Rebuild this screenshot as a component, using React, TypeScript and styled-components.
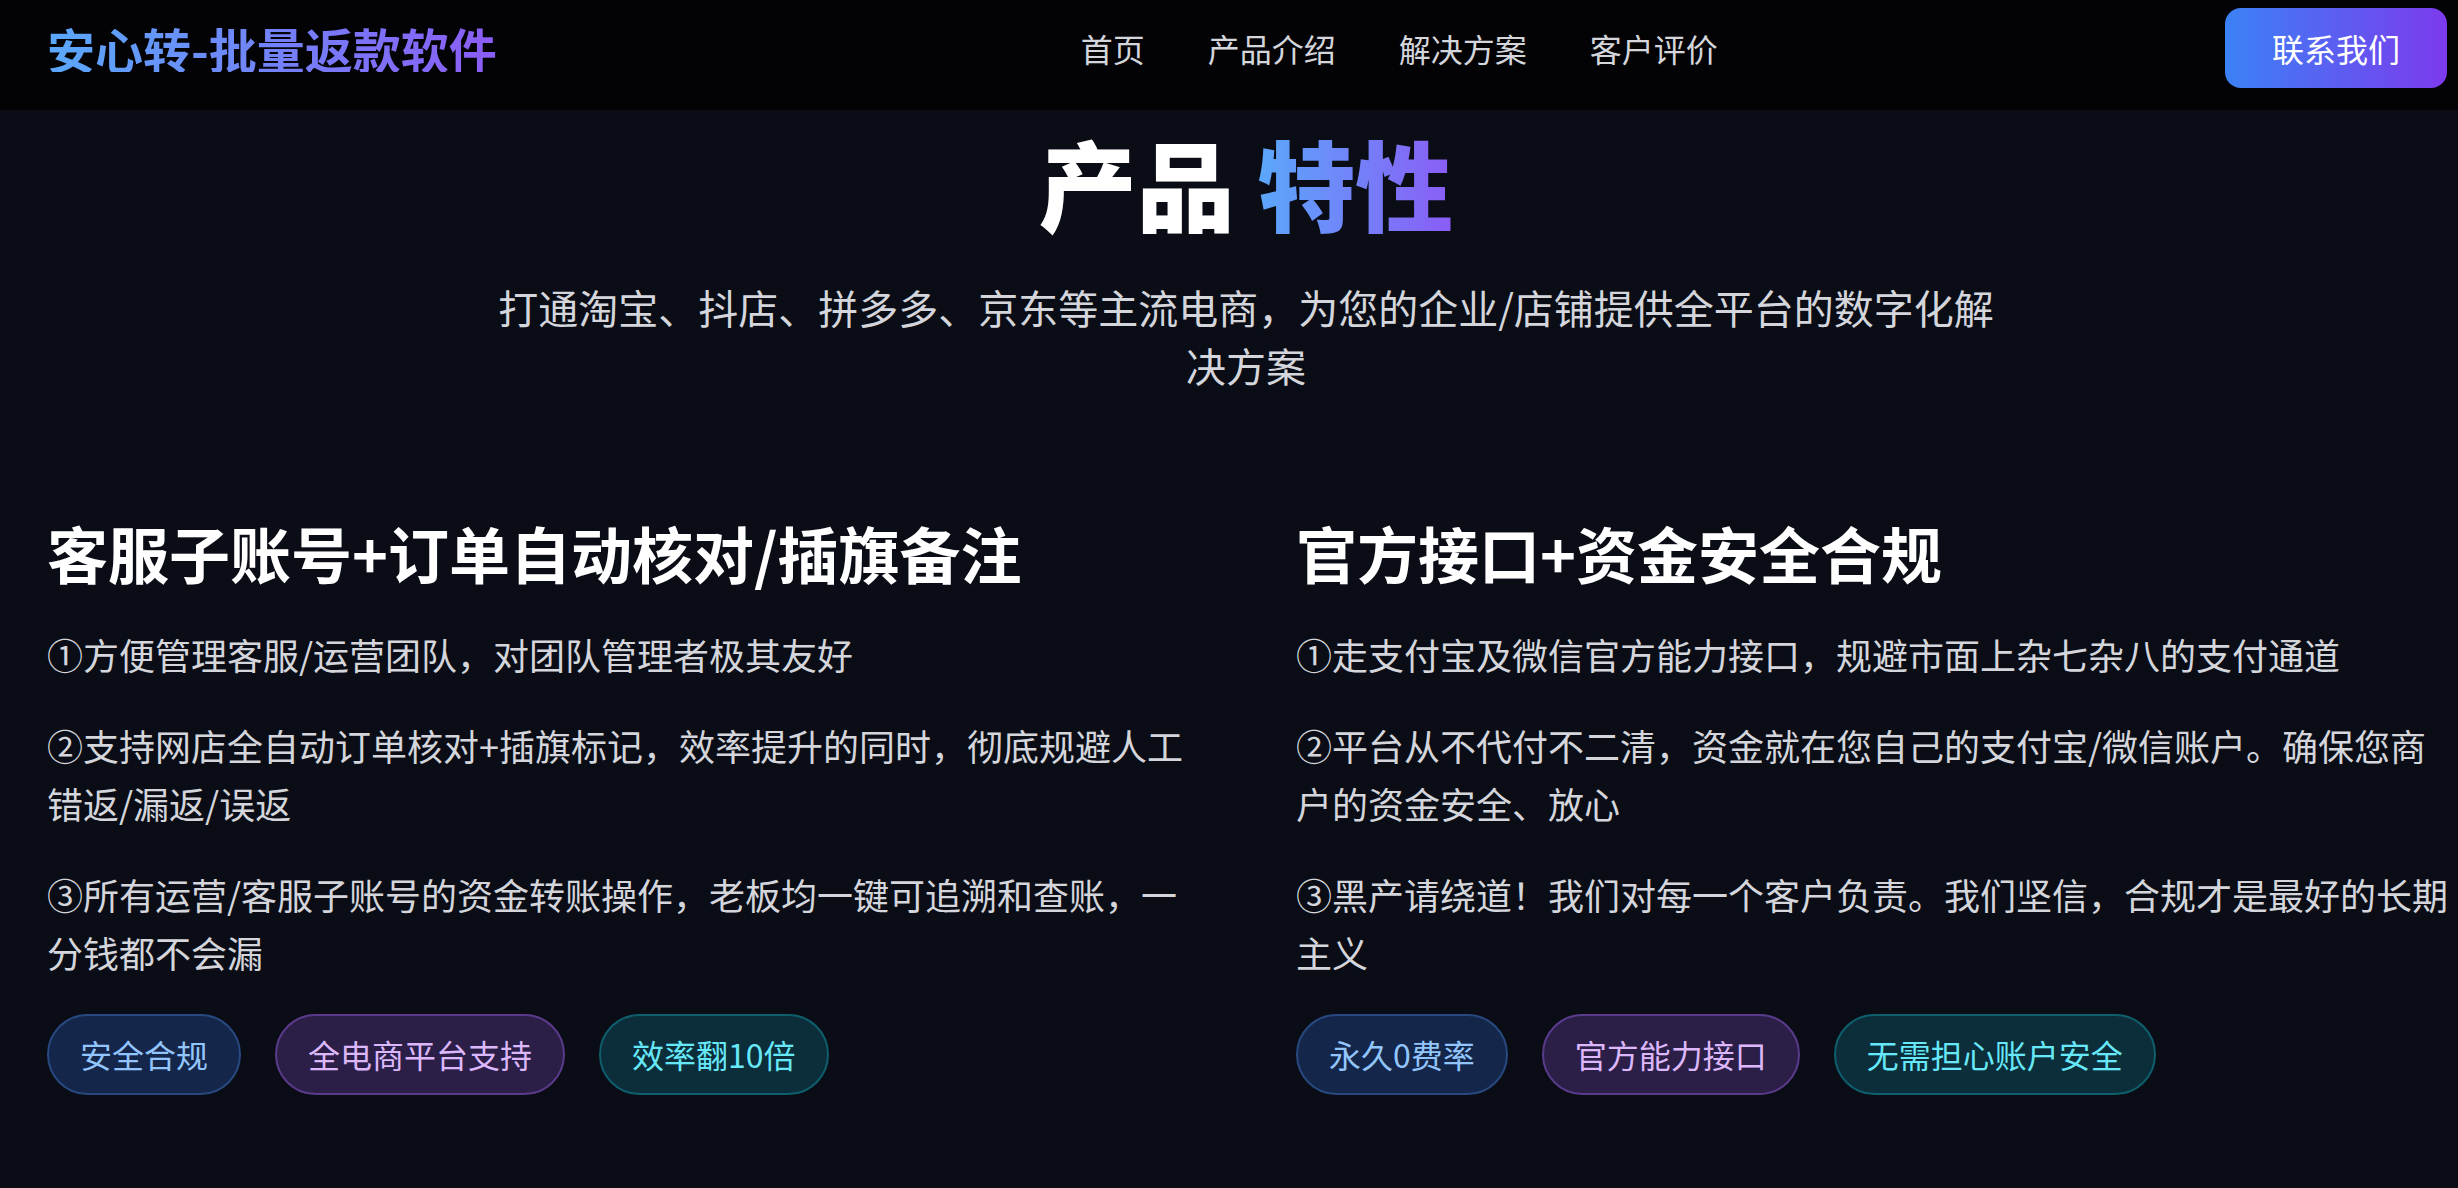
import React from 'react'
import styled, { createGlobalStyle, css } from 'styled-components'

const GlobalStyle = createGlobalStyle`
  html, body {
    margin: 0;
    padding: 0;
    background: #0a0d16;
  }
  body {
    font-family: "Noto Sans CJK SC", "Noto Sans", sans-serif;
    color: #ffffff;
  }
  * {
    box-sizing: border-box;
  }
`

const Page = styled.div`
  min-height: 1188px;
  background: #0a0d16;
`

const Header = styled.header`
  height: 110px;
  background: #030306;
  display: flex;
  align-items: center;
  padding: 0 11px 14px 47px;
`

const Logo = styled.div`
  font-size: 48px;
  font-weight: 700;
  line-height: 1;
  background: linear-gradient(90deg, #5aa8fb 0%, #8b5cf6 100%);
  -webkit-background-clip: text;
  background-clip: text;
  color: transparent;
`

const Nav = styled.nav`
  display: flex;
  gap: 63px;
  margin-left: 584px;
`

const NavLink = styled.a`
  font-size: 32px;
  line-height: 1.4;
  color: #d4d6dc;
  text-decoration: none;
  cursor: pointer;
`

const ContactButton = styled.button`
  margin-left: auto;
  height: 80px;
  padding: 0 47px;
  border: none;
  border-radius: 16px;
  background: linear-gradient(90deg, #3b82f6 0%, #7c3aed 100%);
  color: #ffffff;
  font-family: inherit;
  font-size: 32px;
  cursor: pointer;
`

const Section = styled.section`
  padding: 13px 13px 0 47px;
`

const Title = styled.h2`
  margin: 0;
  text-align: center;
  font-size: 98px;
  font-weight: 900;
  line-height: 1.2;
  color: #ffffff;
`

const GradientText = styled.span`
  background: linear-gradient(90deg, #5aa8fb 0%, #8b5cf6 100%);
  -webkit-background-clip: text;
  background-clip: text;
  color: transparent;
`

const Subtitle = styled.p`
  margin: 37px auto 0;
  max-width: 1530px;
  text-align: center;
  font-size: 40px;
  line-height: 58px;
  color: #d4d6dc;
`

const Columns = styled.div`
  display: grid;
  grid-template-columns: repeat(2, 1158px);
  gap: 91px;
  margin-top: 120px;
`

const Column = styled.div`
  display: flex;
  flex-direction: column;
`

const ColumnTitle = styled.h3`
  margin: 0 0 33px;
  font-size: 61px;
  font-weight: 700;
  line-height: 78px;
  color: #ffffff;
`

const Point = styled.p`
  margin: 0 0 33px;
  font-size: 36px;
  line-height: 58px;
  color: #d4d6dc;
`

const Tags = styled.div`
  display: flex;
  gap: 34px;
`

type Tone = 'blue' | 'purple' | 'cyan'

const tones: Record<Tone, { bg: string; border: string; text: string }> = {
  blue: { bg: '#14264a', border: '#27497f', text: '#93c5fd' },
  purple: { bg: '#2b1f48', border: '#5a3a8a', text: '#dcb8fb' },
  cyan: { bg: '#0b2e3a', border: '#0f5e6c', text: '#67e8f9' },
}

const Tag = styled.span<{ $tone: Tone }>(
  ({ $tone }) => css`
    display: inline-flex;
    align-items: center;
    padding: 15px 31px;
    border-radius: 999px;
    border: 2px solid ${tones[$tone].border};
    background: ${tones[$tone].bg};
    color: ${tones[$tone].text};
    font-size: 32px;
    line-height: 47px;
  `,
)

type Feature = {
  title: string
  points: string[]
  tags: [string, Tone][]
}

const features: Feature[] = [
  {
    title: '客服子账号+订单自动核对/插旗备注',
    points: [
      '①方便管理客服/运营团队，对团队管理者极其友好',
      '②支持网店全自动订单核对+插旗标记，效率提升的同时，彻底规避人工错返/漏返/误返',
      '③所有运营/客服子账号的资金转账操作，老板均一键可追溯和查账，一分钱都不会漏',
    ],
    tags: [
      ['安全合规', 'blue'],
      ['全电商平台支持', 'purple'],
      ['效率翻10倍', 'cyan'],
    ],
  },
  {
    title: '官方接口+资金安全合规',
    points: [
      '①走支付宝及微信官方能力接口，规避市面上杂七杂八的支付通道',
      '②平台从不代付不二清，资金就在您自己的支付宝/微信账户。确保您商户的资金安全、放心',
      '③黑产请绕道！我们对每一个客户负责。我们坚信，合规才是最好的长期主义',
    ],
    tags: [
      ['永久0费率', 'blue'],
      ['官方能力接口', 'purple'],
      ['无需担心账户安全', 'cyan'],
    ],
  },
]

export default function App() {
  return (
    <Page>
      <GlobalStyle />
      <Header>
        <Logo>安心转-批量返款软件</Logo>
        <Nav>
          <NavLink>首页</NavLink>
          <NavLink>产品介绍</NavLink>
          <NavLink>解决方案</NavLink>
          <NavLink>客户评价</NavLink>
        </Nav>
        <ContactButton>联系我们</ContactButton>
      </Header>
      <Section>
        <Title>
          产品 <GradientText>特性</GradientText>
        </Title>
        <Subtitle>打通淘宝、抖店、拼多多、京东等主流电商，为您的企业/店铺提供全平台的数字化解决方案</Subtitle>
        <Columns>
          {features.map((f) => (
            <Column key={f.title}>
              <ColumnTitle>{f.title}</ColumnTitle>
              {f.points.map((p) => (
                <Point key={p}>{p}</Point>
              ))}
              <Tags>
                {f.tags.map(([label, tone]) => (
                  <Tag key={label} $tone={tone}>
                    {label}
                  </Tag>
                ))}
              </Tags>
            </Column>
          ))}
        </Columns>
      </Section>
    </Page>
  )
}
